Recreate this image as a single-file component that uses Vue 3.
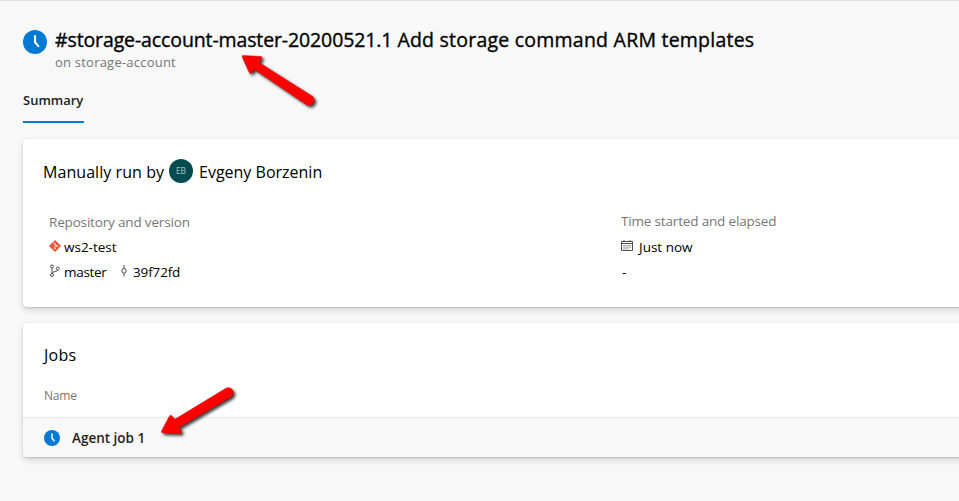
<script setup>
const job = 'Agent job 1'
</script>

<template>
  <main class="page">
    <header class="head">
      <svg class="clock" viewBox="0 0 24 24"><circle cx="12" cy="12" r="12" /><path d="M12 6v6.3l3.3 3.8" /></svg>
      <div>
        <h1><span class="build">#storage-account-master-20200521.1</span> <span class="title">Add storage command ARM templates</span></h1>
        <p class="sub"><span>on storage-account</span></p>
      </div>
    </header>
    <nav class="tabs"><a class="tab"><span>Summary</span></a></nav>

    <section class="card run">
      <div class="by">
        <span class="by-label">Manually run by</span>
        <span class="avatar">EB</span>
        <span class="by-name">Evgeny Borzenin</span>
      </div>
      <div class="facts">
        <div class="repo">
          <div class="line label"><span class="t-repo">Repository and version</span></div>
          <div class="line">
            <svg class="git" viewBox="0 0 12 12"><path class="diamond" d="M6 0.5 11.5 6 6 11.5 0.5 6z" /><path class="mark" d="M4.4 2.1 6 3.8v4.7M6 4l2 2.1" /><circle cx="6" cy="8.5" r=".8" /><circle cx="8" cy="6.1" r=".8" /><circle cx="6" cy="3.9" r=".7" /></svg>
            <span class="t-ws">ws2-test</span>
          </div>
          <div class="line">
            <svg class="branch" viewBox="0 0 12 14"><circle cx="3" cy="2.5" r="1.5" /><circle cx="3" cy="11" r="1.5" /><circle cx="8.8" cy="4.5" r="1.5" /><path d="M3 4v5.5M8.8 6c0 2-5.4 1-5.8 3.3" /></svg>
            <span class="t-master">master</span>
            <svg class="commit" viewBox="0 0 8 14"><path d="M4 1v3.5M4 9.2v3.3" /><ellipse cx="4" cy="6.8" rx="2.2" ry="2.4" /></svg>
            <span class="t-hash">39f72fd</span>
          </div>
        </div>
        <div class="time">
          <div class="line label time-label"><span class="t-time">Time started and elapsed</span></div>
          <div class="line">
            <svg class="cal" viewBox="0 0 12 12"><path d="M.5 1.5h11v9H.5zM.5 3.5h11M3 0v2M9 0v2" /><path class="dots" d="M2.5 5.5h7M2.5 7.2h7M2.5 8.9h5" /></svg>
            <span class="t-now">Just now</span>
          </div>
          <div class="line"><span class="dash">-</span></div>
        </div>
      </div>
    </section>

    <section class="card jobs">
      <h2><span>Jobs</span></h2>
      <div class="column"><span>Name</span></div>
      <div class="row">
        <svg class="clock small" viewBox="0 0 24 24"><circle cx="12" cy="12" r="12" /><path d="M12 6v6.3l3.3 3.8" /></svg>
        <span class="job">{{ job }}</span>
      </div>
    </section>

    <svg class="arrow first" viewBox="0 0 100 70"><path d="M12.5 10.5 31 11.5Q33 12 31.5 14L29 17.5 81 50.5A5 5 0 0 1 77 60L24.5 24.5 21.5 28Q20.3 29 19.3 27.5L12.3 12Q12 10.5 12.5 10.5z" /></svg>
    <svg class="arrow second" viewBox="0 0 100 70"><path d="M11.5 51 19.5 36Q20.8 34.5 22 36L24.5 39.5 75.5 8.5A5 5 0 0 1 81 17L29 47.5 31.5 51.5Q32 53.5 30 53.5L13 53Q11 52.5 11.5 51z" /></svg>
  </main>
</template>

<style>
html, body { margin: 0; overflow: hidden; background: #f8f8f8; }
</style>

<style scoped>
* { box-sizing: border-box; }
.page { position: relative; height: 501px; overflow: hidden; padding-left: 23px; border-top: 1px solid #e2e2e2; background: #f8f8f8; color: #000; font: 13.5px/20px "Open Sans", "Noto Sans", sans-serif; white-space: nowrap; }
.head { display: flex; gap: 8px; padding-top: 25px; }
.clock { width: 24px; height: 24px; margin-top: 4px; flex: none; }
.clock circle { fill: #0078d4; }
.clock path { fill: none; stroke: #fff; stroke-width: 2.2; stroke-linecap: round; stroke-linejoin: round; }
h1, h2, p { margin: 0; font-weight: 400; }
h1 { height: 27px; font-size: 19.5px; line-height: 27px; -webkit-text-stroke: .35px #000; }
.build { letter-spacing: -.12px; }
.title { letter-spacing: .23px; }
.sub { height: 18px; font-size: 13px; line-height: 18px; color: #767676; letter-spacing: .22px; }
.tabs { height: 51px; padding-top: 16px; display: flex; }
.tab { width: 61px; height: 37px; margin-top: -1px; border-bottom: 2px solid #0078d4; font-size: 13px; line-height: 29px; font-weight: 600; color: #222; }
.card { width: 970px; background: #fff; border-radius: 4px; box-shadow: 0 3px 7px rgba(0,0,0,.14), 0 1px 2px rgba(0,0,0,.14); }
.run { height: 168px; margin-top: 17px; padding: 20px 20px 0; }
.by { display: flex; align-items: center; height: 24px; font-size: 16px; }
.by-label { width: 126px; padding-top: 2px; letter-spacing: .06px; }
.by-name { padding-top: 2px; }
.avatar { width: 24px; height: 24px; margin-right: 6px; border-radius: 50%; background: #004b50; color: #a9c4c6; font-size: 8.5px; line-height: 24px; text-align: center; }
.facts { display: flex; padding: 26px 0 0 6px; }
.repo { width: 572px; }
.line { display: flex; align-items: center; height: 25px; }
.label { color: #767676; letter-spacing: -.17px; }
.time-label { padding-bottom: 2px; }
svg { display: block; flex: none; overflow: visible; }
.git { width: 12px; height: 12px; margin: -2px 3px 0 0; }
.diamond { fill: #f05133; stroke: #f05133; stroke-linejoin: round; }
.mark { fill: none; stroke: #fff; stroke-width: .8; }
.git circle { fill: #fff; }
.branch, .commit, .cal { fill: none; stroke: #444; stroke-width: .95; }
.branch { width: 12px; height: 14px; margin: -2px 3px 0 0; }
.t-master { width: 56px; letter-spacing: -.3px; }
.t-hash { letter-spacing: -.14px; }
.commit { width: 8px; height: 14px; margin: -2px 5px 0 0; }
.cal { width: 12px; height: 12px; margin: -2px 6px 0 0; }
.dots { stroke-dasharray: 1 1; }
.dash { padding-left: 1px; }
.jobs { height: 134px; margin-top: 16px; padding-top: 20px; overflow: hidden; }
h2 { padding-left: 21px; font-size: 16px; line-height: 24px; letter-spacing: .3px; }
.column { height: 50px; padding: 19px 0 0 21px; font-size: 12px; color: #767676; letter-spacing: -.2px; }
.row { display: flex; align-items: center; gap: 12px; height: 40px; padding-left: 21px; border-top: 1px solid #e8e8e8; background: #f8f8f8; color: #222; font-weight: 600; }
.small { width: 16px; height: 16px; margin: 0; }
.arrow { position: absolute; width: 100px; height: 70px; filter: drop-shadow(2px 2px 1.5px rgba(0,0,0,.75)); }
.arrow path { fill: #f00; stroke: #d00000; stroke-width: .5; }
.first { left: 230px; top: 44px; }
.second { left: 150px; top: 379px; }
</style>
